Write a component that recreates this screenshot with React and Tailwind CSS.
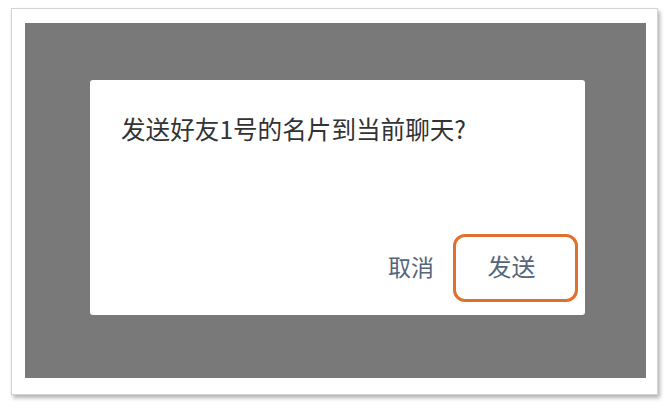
export default function App() {
  return (
    <div
      className="w-[671px] h-[410px] bg-white pl-[11px] pt-[8px]"
      style={{ fontFamily: '"Noto Sans CJK SC", "Noto Sans", sans-serif' }}
    >
      {/* outer frame */}
      <div className="w-[647px] h-[387px] bg-white border border-[#d4d4d4] shadow-[2px_3px_4px_rgba(0,0,0,0.3)] pl-[13px] pt-[14px]">
        {/* gray overlay */}
        <div className="w-[621px] h-[355px] bg-[#797979] pl-[65px] pt-[57px]">
          {/* dialog */}
          <div className="w-[495px] h-[235px] bg-white rounded-[3px] flex flex-col">
            <p className="pl-[31px] pt-[31px] text-[24.6px] leading-[34px] text-[#333333]">
              发送好友1号的名片到当前聊天?
            </p>
            <div className="mt-auto mb-[13px] mr-[7px] flex items-center justify-end">
              <button className="text-[23px] text-[#56657a] mr-[19px] pb-[4px]">取消</button>
              <button className="w-[125px] h-[68px] border-[3px] border-[#e0702e] rounded-[12px] text-[24px] text-[#56657a] pr-[8px] pb-[4px]">
                发送
              </button>
            </div>
          </div>
        </div>
      </div>
    </div>
  );
}
